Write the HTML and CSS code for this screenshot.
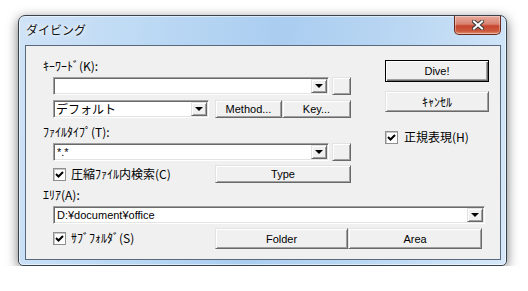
FILE: index.html
```html
<!DOCTYPE html>
<html lang="ja">
<head>
  <meta charset="UTF-8">
  <title>ダイビング</title>
  <link rel="stylesheet" href="styles.css">
</head>
<body>

  <div class="window">
    <div class="titlebar">
      <span class="title">ダイビング</span>
      <div class="close-btn">
        <svg width="12" height="10" viewBox="0 0 12 10">
          <path d="M2 1.5 L10 8.5 M10 1.5 L2 8.5" stroke="#3a3a3a" stroke-width="4" stroke-linecap="square"/>
          <path d="M2 1.5 L10 8.5 M10 1.5 L2 8.5" stroke="#ffffff" stroke-width="2" stroke-linecap="square"/>
        </svg>
      </div>
    </div>

    <div class="client">
      <div class="top">
        <div class="left-col">
          <div class="label">ｷｰﾜｰﾄﾞ(K):</div>
          <div class="row">
            <div class="combo combo-wide"><span class="combo-text"></span><span class="combo-arrow"><i></i></span></div>
            <div class="btn btn-small"></div>
          </div>
          <div class="row row-2">
            <div class="combo combo-short"><span class="combo-text combo-jp">デフォルト</span><span class="combo-arrow"><i></i></span></div>
            <div class="btn btn-method">Method...</div>
            <div class="btn btn-key">Key...</div>
          </div>

          <div class="label label-2">ﾌｧｲﾙﾀｲﾌﾟ(T):</div>
          <div class="row">
            <div class="combo combo-wide"><span class="combo-text">*.*</span><span class="combo-arrow"><i></i></span></div>
            <div class="btn btn-small"></div>
          </div>
          <div class="row row-check">
            <label class="check"><span class="box"><svg width="9" height="9" viewBox="0 0 9 9"><path d="M1 4 L3.5 6.5 L8 2" stroke="#000" stroke-width="2" fill="none"/></svg></span>圧縮ﾌｧｲﾙ内検索(C)</label>
            <div class="btn btn-type">Type</div>
          </div>
        </div>

        <div class="right-col">
          <div class="btn btn-default">Dive!</div>
          <div class="btn btn-cancel">ｷｬﾝｾﾙ</div>
          <label class="check check-regex"><span class="box"><svg width="9" height="9" viewBox="0 0 9 9"><path d="M1 4 L3.5 6.5 L8 2" stroke="#000" stroke-width="2" fill="none"/></svg></span>正規表現(H)</label>
        </div>
      </div>

      <div class="label label-3">ｴﾘｱ(A):</div>
      <div class="row">
        <div class="combo combo-area"><span class="combo-text">D:¥document¥office</span><span class="combo-arrow"><i></i></span></div>
      </div>
      <div class="row row-last">
        <label class="check"><span class="box"><svg width="9" height="9" viewBox="0 0 9 9"><path d="M1 4 L3.5 6.5 L8 2" stroke="#000" stroke-width="2" fill="none"/></svg></span>ｻﾌﾞﾌｫﾙﾀﾞ(S)</label>
        <div class="btn btn-folder">Folder</div>
        <div class="btn btn-area">Area</div>
      </div>
    </div>
  </div>

</body>
</html>
```

FILE: styles.css
```css
body {
  margin: 0;
  background-color: #ffffff;
  font-family: "Liberation Sans", "Noto Sans CJK JP", sans-serif;
  font-size: 11px;
  color: #000;
}

/* window frame */
.window {
  box-sizing: border-box;
  width: 489px;
  height: 251px;
  margin: 15px 0 0 18px;
  padding: 0 5px 5px 6px;
  border: 1px solid #39434d;
  border-radius: 7px 7px 5px 5px;
  background: linear-gradient(100deg, #d0e3f7 0%, #bcd9f4 25%, #aacdf0 50%, #bcd8f3 75%, #d6e8f9 100%);
  box-shadow: 0 3px 12px rgba(0, 0, 0, 0.55), inset 0 0 0 1px rgba(255, 255, 255, 0.55);
}

.titlebar {
  height: 29px;
  display: flex;
  justify-content: space-between;
  align-items: flex-start;
}

.title {
  margin: 7px 0 0 1px;
  font-family: "Noto Sans CJK JP", sans-serif;
  font-size: 12px;
  line-height: 14px;
  color: #111;
  text-shadow: 0 0 6px #fff, 0 0 3px #fff;
}

.close-btn {
  box-sizing: border-box;
  width: 47px;
  height: 19px;
  display: flex;
  align-items: center;
  justify-content: center;
  border: 1px solid #6b2a20;
  border-top: none;
  border-radius: 0 0 5px 5px;
  background: linear-gradient(#e9a99b 0%, #d88270 45%, #c6452e 55%, #cc5a3e 85%, #e39a7c 100%);
  box-shadow: inset 0 0 0 1px rgba(255, 255, 255, 0.35);
}

/* client area */
.client {
  box-sizing: border-box;
  height: 215px;
  border: 1px solid #59687a;
  background-color: #f0f0f0;
  padding: 0 0 0 17px;
}

.top {
  display: flex;
}

.left-col {
  width: 308px;
  padding-top: 13px;
}

.right-col {
  width: 104px;
  margin-left: 34px;
  padding-top: 14px;
  display: flex;
  flex-direction: column;
}

.label {
  height: 14px;
  line-height: 14px;
  font-family: "Noto Sans CJK JP", sans-serif;
  font-size: 12px;
  white-space: nowrap;
}

.label-2 {
  margin-top: 7px;
}

.label-3 {
  margin-top: 5px;
}

.row {
  display: flex;
  margin-left: 10px;
  margin-top: 4px;
}

.row-2 {
  margin-top: 5px;
}

.row-check {
  width: 298px;
  align-items: center;
}

.row-last {
  width: 432px;
  align-items: flex-start;
}

/* combo boxes */
.combo {
  box-sizing: border-box;
  height: 18px;
  display: flex;
  align-items: stretch;
  background-color: #fff;
  border: 1px solid;
  border-color: #a0a0a0 #ffffff #ffffff #a0a0a0;
  box-shadow: inset 1px 1px #696969, inset -1px -1px #e3e3e3;
}

.combo-text {
  flex: 1;
  line-height: 16px;
  padding-left: 3px;
  white-space: nowrap;
  overflow: hidden;
}

.combo-jp {
  font-family: "Noto Sans CJK JP", sans-serif;
  font-size: 12px;
  padding-left: 2px;
}

.combo-arrow {
  box-sizing: border-box;
  width: 16px;
  margin: 1px 1px 1px 0;
  display: flex;
  align-items: center;
  justify-content: center;
  background-color: #f0f0f0;
  border: 1px solid;
  border-color: #e3e3e3 #696969 #696969 #e3e3e3;
  box-shadow: inset 1px 1px #fff, inset -1px -1px #a0a0a0;
}

.combo-arrow i {
  width: 0;
  height: 0;
  border-left: 4px solid transparent;
  border-right: 4px solid transparent;
  border-top: 4px solid #000;
}

.combo-wide {
  width: 276px;
}

.combo-short {
  width: 156px;
}

.combo-area {
  width: 432px;
}

/* buttons */
.btn {
  box-sizing: border-box;
  display: flex;
  align-items: center;
  justify-content: center;
  height: 18px;
  background-color: #f0f0f0;
  border: 1px solid;
  border-color: #e3e3e3 #696969 #696969 #e3e3e3;
  box-shadow: inset 1px 1px #fff, inset -1px -1px #a0a0a0;
  white-space: nowrap;
}

.btn-small {
  width: 19px;
  margin-left: 3px;
}

.btn-method {
  width: 67px;
  margin-left: 6px;
}

.btn-key {
  width: 69px;
}

.btn-type {
  width: 136px;
  margin-left: auto;
}

.btn-default {
  height: 22px;
  border-color: #000;
  box-shadow: inset 1px 1px #fff, inset -1px -1px #696969, inset -2px -2px #a0a0a0;
}

.btn-cancel {
  height: 21px;
  margin-top: 9px;
  font-size: 12px;
}

.btn-folder {
  width: 133px;
  height: 21px;
  margin-left: auto;
}

.btn-area {
  width: 134px;
  height: 21px;
  margin-right: 3px;
}

/* checkboxes */
.check {
  display: flex;
  align-items: center;
  gap: 5px;
  font-family: "Noto Sans CJK JP", sans-serif;
  font-size: 12px;
  line-height: 14px;
  white-space: nowrap;
}

.box {
  box-sizing: border-box;
  width: 13px;
  height: 13px;
  display: flex;
  align-items: center;
  justify-content: center;
  background-color: #fff;
  border: 1px solid #8e8f8f;
  box-shadow: inset 1px 1px #c8c8c8;
}

.row-last .check {
  margin-top: 3px;
}

.check-regex {
  margin-top: 18px;
  gap: 6px;
}
```
